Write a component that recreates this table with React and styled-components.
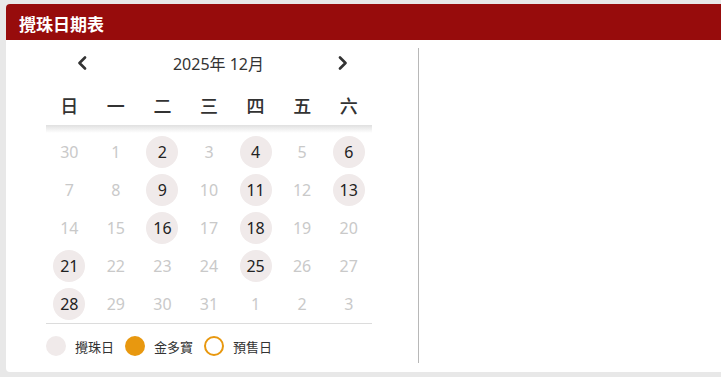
import React from 'react';
import styled, { createGlobalStyle } from 'styled-components';

const GlobalStyle = createGlobalStyle`
  html, body {
    margin: 0;
    padding: 0;
    background: #e8e8e8;
    overflow: hidden;
  }
  body {
    font-family: "Noto Sans", "Noto Sans CJK TC", sans-serif;
  }
`;

const Page = styled.div`
  padding: 4px 0 5px 6px;
  height: 377px;
  box-sizing: border-box;
`;

const Card = styled.div`
  margin-right: -20px;
  height: 368px;
  background: #fff;
  border-radius: 4px;
  overflow: hidden;
  display: flex;
  flex-direction: column;
`;

const Header = styled.div`
  height: 36px;
  flex-shrink: 0;
  background: #970c0c;
  color: #fff;
  font-size: 17px;
  font-weight: 700;
  display: flex;
  align-items: center;
  padding: 2px 0 0 13px;
  box-sizing: border-box;
`;

const Body = styled.div`
  flex: 1;
  display: flex;
  padding: 8px 0 9px 0;
  min-height: 0;
`;

const CalendarPane = styled.div`
  width: 413px;
  padding-left: 40px;
  box-sizing: border-box;
  border-right: 1px solid #b8b8b8;
`;

const Calendar = styled.div`
  width: 326px;
`;

const NavRow = styled.div`
  height: 30px;
  display: flex;
  align-items: center;
  justify-content: space-between;
  padding: 0 24px 0 31px;
`;

const NavButton = styled.button`
  border: none;
  background: none;
  padding: 0;
  width: 10px;
  height: 14px;
  display: flex;
  align-items: center;
  justify-content: center;
  cursor: pointer;
`;

const Title = styled.div`
  padding-left: 12px;
  font-size: 16px;
  color: #333;
  white-space: nowrap;
`;

const Grid = styled.div`
  display: grid;
  grid-template-columns: repeat(7, 1fr);
`;

const WeekRow = styled(Grid)`
  margin-top: 7px;
  height: 40px;
  align-items: center;
`;

const WeekDay = styled.div`
  text-align: center;
  font-size: 18px;
  font-weight: 500;
  color: #333;
`;

const Shade = styled.div`
  height: 8px;
  background: linear-gradient(#e0e0e0, #ffffff);
`;

const DayCell = styled.div`
  height: 38px;
  display: flex;
  align-items: center;
  justify-content: center;
`;

const DayNum = styled.div`
  width: 32px;
  height: 32px;
  border-radius: 50%;
  display: flex;
  align-items: center;
  justify-content: center;
  font-size: 16px;
  background: ${p => (p.$draw ? '#f0eaea' : 'transparent')};
  color: ${p => (p.$draw ? '#222' : '#c9c9c9')};
`;

const Legend = styled.div`
  border-top: 1px solid #dcdcdc;
  padding-top: 12px;
  display: flex;
  align-items: center;
  gap: 11px;
`;

const LegendItem = styled.div`
  display: flex;
  align-items: center;
  gap: 9px;
  font-size: 13px;
  color: #333;
`;

const Dot = styled.span`
  width: 20px;
  height: 20px;
  border-radius: 50%;
  box-sizing: border-box;
  background: ${p => p.$bg};
  border: ${p => (p.$ring ? '2px solid #e8980f' : 'none')};
`;

const Chevron = ({ dir }) => (
  <svg width="10" height="14" viewBox="0 0 10 14">
    <polyline
      points={dir === 'left' ? '8,1.5 2.5,7 8,12.5' : '2,1.5 7.5,7 2,12.5'}
      fill="none"
      stroke="#333"
      strokeWidth="2.6"
      strokeLinecap="round"
      strokeLinejoin="round"
    />
  </svg>
);

const weekDays = ['日', '一', '二', '三', '四', '五', '六'];
const drawDays = [2, 4, 6, 9, 11, 13, 16, 18, 21, 25, 28];

// December 2025: starts on Monday, Nov 30 leads the grid
const days = [30];
for (let d = 1; d <= 31; d++) days.push(d);
for (let d = 1; d <= 3; d++) days.push(d);

export default function App() {
  return (
    <Page>
      <GlobalStyle />
      <Card>
        <Header>攪珠日期表</Header>
        <Body>
          <CalendarPane>
            <Calendar>
              <NavRow>
                <NavButton><Chevron dir="left" /></NavButton>
                <Title>2025年 12月</Title>
                <NavButton><Chevron dir="right" /></NavButton>
              </NavRow>
              <WeekRow>
                {weekDays.map(w => <WeekDay key={w}>{w}</WeekDay>)}
              </WeekRow>
              <Shade />
              <Grid>
                {days.map((d, i) => {
                  const inMonth = i > 0 && i <= 31;
                  return (
                    <DayCell key={i}>
                      <DayNum $draw={inMonth && drawDays.includes(d)}>{d}</DayNum>
                    </DayCell>
                  );
                })}
              </Grid>
              <Legend>
                <LegendItem><Dot $bg="#f0eaea" />攪珠日</LegendItem>
                <LegendItem><Dot $bg="#e8980f" />金多寶</LegendItem>
                <LegendItem><Dot $bg="#fff" $ring />預售日</LegendItem>
              </Legend>
            </Calendar>
          </CalendarPane>
        </Body>
      </Card>
    </Page>
  );
}
